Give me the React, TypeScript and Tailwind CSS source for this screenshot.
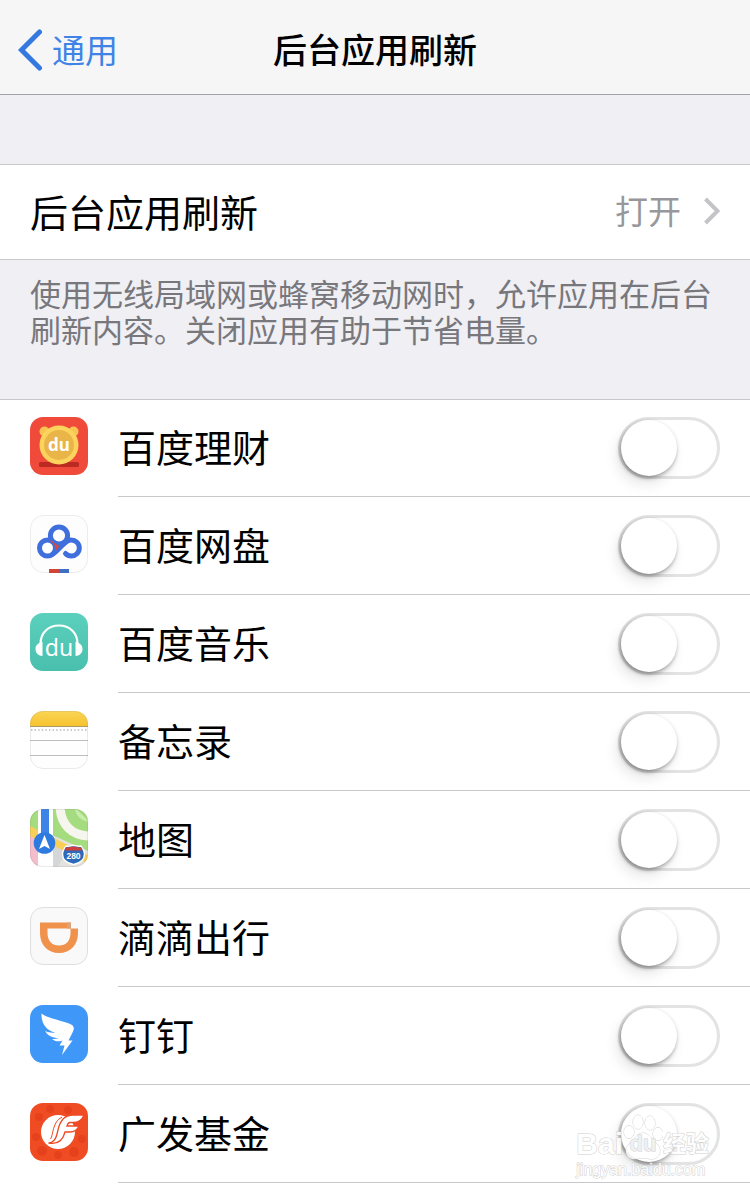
import type { ReactNode } from "react";

const tile = "block size-[58px] shrink-0";

function FinanceIcon() {
  return (
    <svg className={tile} viewBox="0 0 58 58" aria-hidden="true">
      <rect width="58" height="58" rx="13" fill="#f04a3b" />
      <rect x="9" y="45" width="40" height="5" rx="1.5" fill="#bb2a22" />
      <circle cx="14.5" cy="14.500" r="5" fill="#f8c552" />
      <circle cx="43.5" cy="14.500" r="5" fill="#f8c552" />
      <circle cx="29" cy="28" r="19.500" fill="#fbd35d" />
      <circle cx="29" cy="28" r="15" fill="#e9b548" />
      <text x="29" y="34" textAnchor="middle" fontFamily="Noto Sans, sans-serif" fontWeight="700" fontSize="17" fill="#fff">du</text>
    </svg>
  );
}

function DriveIcon() {
  return (
    <svg className={tile} viewBox="0 0 58 58" aria-hidden="true">
      <rect x=".5" y=".5" width="57" height="57" rx="13" fill="#fdfdfd" stroke="#ececec" />
      <g fill="none" stroke="#3f6fdc" strokeWidth="5" strokeLinecap="round">
        <circle cx="29" cy="20.500" r="8.600" />
        <circle cx="17.500" cy="33" r="8" />
        <path d="M23 39C27 36.500 31 31 35.500 27.500A8 8 0 1 1 35.500 38.500" />
      </g>
      <path d="M21.500 25C23.500 28 26 29.500 29.500 31L25.500 36C26 31.500 24 28 20 26Z" fill="#d94a3c" />
      <path d="M19 54h10v4H19z" fill="#cf4638" />
      <path d="M29 54h10v4H29z" fill="#3f6fc4" />
    </svg>
  );
}

function MusicIcon() {
  return (
    <svg className={tile} viewBox="0 0 58 58" aria-hidden="true">
      <defs>
        <linearGradient id="music" x1="0" y1="0" x2="0" y2="1">
          <stop offset="0" stopColor="#5bd0bd" />
          <stop offset="1" stopColor="#49bfad" />
        </linearGradient>
      </defs>
      <rect width="58" height="58" rx="13" fill="url(#music)" />
      <path d="M10.500 31C10.500 19.500 18.500 12.500 29 12.500S47.500 19.500 47.500 31" fill="none" stroke="#fff" strokeWidth="2.200" />
      <path d="M12.500 29V43C8.500 43 5.500 40 5.500 36S8.500 29.500 12.500 29ZM45.500 29V43C49.500 43 52.500 40 52.500 36S49.500 29.500 45.500 29Z" fill="#fff" />
      <text x="29" y="43" textAnchor="middle" fontFamily="Noto Sans, sans-serif" fontWeight="400" fontSize="23" fill="#fff">du</text>
    </svg>
  );
}

function NotesIcon() {
  return (
    <svg className={tile} viewBox="0 0 58 58" aria-hidden="true">
      <defs>
        <clipPath id="notes"><rect width="58" height="58" rx="13" /></clipPath>
        <linearGradient id="notesTop" x1="0" y1="0" x2="0" y2="1">
          <stop offset="0" stopColor="#fbd555" />
          <stop offset="1" stopColor="#f5c32f" />
        </linearGradient>
      </defs>
      <g clipPath="url(#notes)">
        <rect width="58" height="58" fill="#fefefe" />
        <rect width="58" height="15" fill="url(#notesTop)" />
        <path d="M0 15.500H58" stroke="#b09c62" />
        <path d="M1 19H58" stroke="#b5b5b5" strokeWidth="1.400" strokeDasharray="1.400 2.200" />
        <path d="M0 29.500H58M0 44.500H58" stroke="#bdbdbd" />
      </g>
      <rect x=".5" y=".5" width="57" height="57" rx="12.500" fill="none" stroke="#999" strokeOpacity=".2" />
    </svg>
  );
}

function MapsIcon() {
  return (
    <svg className={tile} viewBox="0 0 58 58" aria-hidden="true">
      <defs>
        <clipPath id="maps"><rect width="58" height="58" rx="13" /></clipPath>
      </defs>
      <g clipPath="url(#maps)">
        <rect width="58" height="58" fill="#e4e2dc" />
        <path d="M22 0H58V42L22 26Z" fill="#a5dc80" />
        <path d="M0 0H8V22L0 18Z" fill="#a5dc80" />
        <path d="M0 27L8 30V58H0Z" fill="#f4bdcb" />
        <path d="M0 17L58 46V54L46 50L0 27Z" fill="#f9cf58" />
        <path d="M22 36L36 43L28 58H22Z" fill="#d5d6d8" />
        <path d="M30 -2C31 16 42 27 60 27" fill="none" stroke="#f6f6ee" strokeWidth="9" />
        <path d="M45 -1C46 7 51 12 60 13" fill="#c8edab" />
        <path d="M8 0H23V58H8Z" fill="#fff" />
        <path d="M11 0H19V30H11Z" fill="#3c85e6" />
        <circle cx="14.500" cy="34" r="10.800" fill="#2f7ade" />
        <path d="M14.500 26L20 40L14.500 37L9 40Z" fill="#fff" />
        <path d="M36 37C39 38 41 36.500 43.500 36.500S48 38 51 37C52 39 54.500 41 54.500 45C54.500 50 51 54 43.500 55.500C36 54 32.500 50 32.500 45C32.500 41 35 39 36 37Z" fill="#2d6bb8" stroke="#fff" strokeWidth="1.400" />
        <path d="M35.500 38.500C38 39 41 37.500 43.500 37.500S49 39 51.500 38.500L52.500 41.500H34.500Z" fill="#cf3d3d" />
        <text x="43.500" y="49.500" textAnchor="middle" fontFamily="Liberation Sans, sans-serif" fontWeight="700" fontSize="8.500" fill="#fff">280</text>
      </g>
      <rect x=".5" y=".5" width="57" height="57" rx="12.500" fill="none" stroke="#777" strokeOpacity=".15" />
    </svg>
  );
}

function RideIcon() {
  return (
    <svg className={tile} viewBox="0 0 58 58" aria-hidden="true">
      <rect x=".5" y=".5" width="57" height="57" rx="12.500" fill="#f9f9f9" stroke="#dedede" />
      <path
        fillRule="evenodd"
        d="M10 15.500H41V21.500H48V26C48 38 40.500 46 29 46S10 38 10 26ZM17.500 21.500V26C17.500 34 22 38.500 29 38.500S40.500 34 40.500 26V21.500Z"
        fill="#f0914c"
      />
      <path d="M37 15.500h4v6h-4z" fill="#dda276" />
    </svg>
  );
}

function WingIcon() {
  return (
    <svg className={tile} viewBox="0 0 58 58" aria-hidden="true">
      <rect width="58" height="58" rx="13" fill="#3f97f8" />
      <path
        d="M11.500 8.500C18 14 36 16 42 20C44.500 22 44 24.500 43 26.500L38.500 35.500H42.500L32 50L34.500 40.500H29.500L32.500 35.500C28.500 37 25 36.500 22 34C25 34 27 33.800 28.500 33C22.500 33 17.500 30.500 15 26C18.500 27.500 22 28 25 27.500C17 25.500 11 19.500 11.500 8.500Z"
        fill="#fff"
      />
    </svg>
  );
}

function FundIcon() {
  return (
    <svg className={tile} viewBox="0 0 58 58" aria-hidden="true">
      <rect width="58" height="58" rx="13" fill="#f04c23" />
      <g fill="#dc3517" opacity=".45">
        <circle cx="9" cy="14" r="4" /><circle cx="20" cy="6" r="4" /><circle cx="38" cy="7" r="4" />
        <circle cx="6" cy="34" r="4" /><circle cx="12" cy="48" r="5" /><circle cx="28" cy="52" r="4" />
        <circle cx="44" cy="49" r="5" /><circle cx="52" cy="36" r="4" />
      </g>
      <circle cx="28" cy="29" r="17" fill="#fff" />
      <path
        d="M18.500 40C25 39.500 26.500 34 28 27C30 17.500 34 12 43 12H54C52 17.500 48 19.500 43 19.500H40C38.500 19.500 37.500 21 37 23H49C47 27.500 43.500 29 40 29H35C33 37 28.500 42 18.500 40Z"
        fill="#fff"
        stroke="#ee4a24"
        strokeWidth="1.300"
      />
      <path d="M20.500 36C23.500 32 22 19 32 14" fill="none" stroke="#ee4a24" strokeWidth="1" />
    </svg>
  );
}

const apps: { id: string; name: string; icon: ReactNode }[] = [
  { id: "finance", name: "百度理财", icon: <FinanceIcon /> },
  { id: "drive", name: "百度网盘", icon: <DriveIcon /> },
  { id: "music", name: "百度音乐", icon: <MusicIcon /> },
  { id: "notes", name: "备忘录", icon: <NotesIcon /> },
  { id: "maps", name: "地图", icon: <MapsIcon /> },
  { id: "ride", name: "滴滴出行", icon: <RideIcon /> },
  { id: "ding", name: "钉钉", icon: <WingIcon /> },
  { id: "fund", name: "广发基金", icon: <FundIcon /> },
];

function AppRow({ id, name, icon }: { id: string; name: string; icon: ReactNode }) {
  return (
    <li className="flex items-start gap-[30px] pl-[30px]">
      <div className="pt-[18px]">{icon}</div>
      <div className="flex h-[98px] flex-1 items-center justify-between border-b border-[#c8c7cc] pr-[30px]">
        <label htmlFor={id} className="pb-[3px] text-[38px] leading-[56px]">{name}</label>
        <input
          id={id}
          type="checkbox"
          role="switch"
          className="h-[62px] w-[102px] shrink-0 cursor-pointer appearance-none rounded-full border-[3px] border-[#e3e3e3] bg-white before:block before:size-[56px] before:rounded-full before:bg-white before:shadow-[-1px_2px_4px_rgba(0,0,0,0.38),-4px_8px_14px_rgba(0,0,0,0.1)] checked:border-[#4cd964] checked:bg-[#4cd964] checked:before:translate-x-10"
        />
      </div>
    </li>
  );
}

function Watermark() {
  const outline = "[-webkit-text-stroke:1px_#c8c8c8] [paint-order:stroke_fill]";
  return (
    <div className="pointer-events-none absolute right-[41px] bottom-[14px] text-white opacity-85" aria-hidden="true">
      <div className={`flex items-end font-['Liberation_Sans','Noto_Sans_CJK_SC',sans-serif] text-[30px] leading-[32px] font-bold ${outline}`}>
        <span>Bai</span>
        <span className="relative flex w-[40px] justify-center">
          <svg className="absolute bottom-0 left-0 h-[46px] w-[40px]" viewBox="0 0 40 46" fill="#fff" stroke="#c8c8c8" aria-hidden="true">
            <ellipse cx="6" cy="18" rx="5" ry="6.500" />
            <ellipse cx="15" cy="8" rx="5" ry="7" />
            <ellipse cx="27" cy="9" rx="5" ry="7" />
            <ellipse cx="35" cy="20" rx="5" ry="6.500" />
            <path d="M20 19C26 19 28 25 33 29C40 35 37 45 29 45C24 45 23 44 20 44S15 45 11 45C3 45 0 35 7 29C12 25 14 19 20 19Z" />
          </svg>
          <span className="relative text-[22px] leading-[32px] text-[#eeeeee]">du</span>
        </span>
        <span className="text-[23px]">经验</span>
      </div>
      <div className={`font-['Liberation_Sans',sans-serif] text-[16px] leading-[20px] font-normal ${outline}`}>jingyan.baidu.com</div>
    </div>
  );
}

export default function App() {
  return (
    <div className="relative flex min-h-screen flex-col bg-[#efeff4] font-['Noto_Sans_CJK_SC',sans-serif] font-normal text-black">
      <header className="grid h-[95px] grid-cols-[1fr_auto_1fr] items-center border-b border-[#a3a3a6] bg-[#f6f6f6] px-[18px] pt-[5px]">
        <a href="#general" className="flex items-center gap-[9px] text-[33px] leading-[48px] text-[#3f83e6]">
          <svg className="h-[42px] w-[25px]" viewBox="0 0 25 42" fill="none" stroke="#3478e0" strokeWidth="5" strokeLinecap="round" strokeLinejoin="miter" aria-hidden="true">
            <path d="M21.500 3L3.500 21L21.500 39" />
          </svg>
          <span className="pb-[2px]">通用</span>
        </a>
        <h1 className="pb-[2px] text-[34px] leading-[48px] font-medium">后台应用刷新</h1>
      </header>

      <main className="flex flex-1 flex-col pt-[69px]">
        <a href="#refresh" className="flex h-[96px] items-center justify-between border-y border-[#c8c7cc] bg-white px-[30px] pb-[2px]">
          <span className="text-[38px] leading-[56px]">后台应用刷新</span>
          <span className="flex items-center gap-[23px] text-[33px] leading-[48px] text-[#98989c]">
            <span className="pb-[3px]">打开</span>
            <svg className="h-[28px] w-[16px]" viewBox="0 0 16 28" fill="none" stroke="#c4c4c8" strokeWidth="4" aria-hidden="true">
              <path d="M1.500 2L13.500 14L1.500 26" />
            </svg>
          </span>
        </a>
        <p className="px-[30px] pt-[15px] pb-[52px] text-[31px] leading-[36px] text-[#77777c]">
          使用无线局域网或蜂窝移动网时，允许应用在后台刷新内容。关闭应用有助于节省电量。
        </p>
        <ul className="flex-1 bg-white shadow-[inset_0_1px_0_#c8c7cc]">
          {apps.map((app) => (
            <AppRow key={app.id} {...app} />
          ))}
        </ul>
      </main>
      <Watermark />
    </div>
  );
}
